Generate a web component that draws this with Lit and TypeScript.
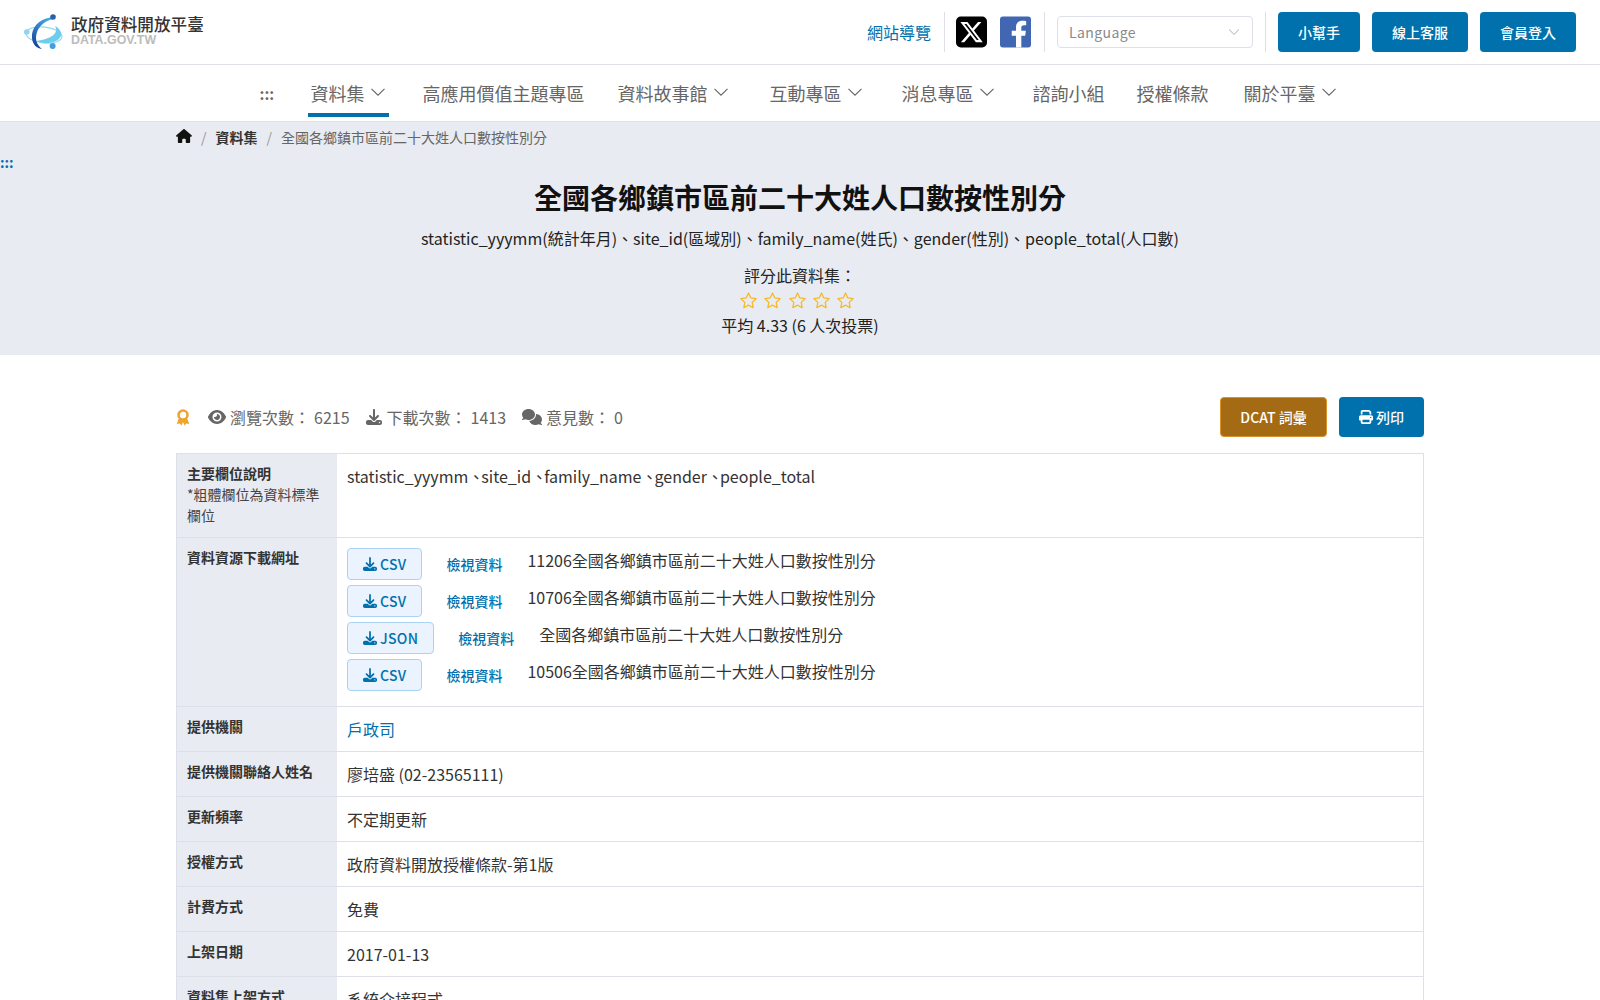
import {LitElement, css, html, svg} from 'lit';
import {customElement} from 'lit/decorators.js';

const DOWNLOAD = svg`<path d="M288 32c0-17.7-14.3-32-32-32s-32 14.3-32 32V274.7l-73.4-73.4c-12.5-12.5-32.8-12.5-45.3 0s-12.5 32.8 0 45.3l128 128c12.5 12.5 32.8 12.5 45.3 0l128-128c12.5-12.5 12.5-32.8 0-45.3s-32.8-12.5-45.3 0L288 274.7V32zM64 352c-35.3 0-64 28.7-64 64v32c0 35.3 28.7 64 64 64H448c35.3 0 64-28.7 64-64V416c0-35.3-28.7-64-64-64H346.5l-45.3 45.3c-25 25-65.5 25-90.5 0L165.5 352H64zm368 56a24 24 0 1 1 0 48 24 24 0 1 1 0-48z"/>`;
const downloadIcon = html`<svg class="ico" viewBox="0 0 512 512" fill="currentColor">${DOWNLOAD}</svg>`;
const chevron = html`<svg class="chev" viewBox="0 0 16 16" fill="none" stroke="currentColor" stroke-width="1.1"><path d="M1.5 4.8 8 11.2l6.5-6.4"/></svg>`;
const star = html`<svg class="star" viewBox="0 0 24 24" fill="none" stroke="#f6b92b" stroke-width="1.6" stroke-linejoin="round"><path d="M12 2.6l2.9 6.2 6.7.9-4.9 4.7 1.2 6.7-5.9-3.3-5.9 3.3 1.2-6.7-4.9-4.7 6.7-.9z"/></svg>`;

// after: the site's menu items are not evenly spaced
const NAV = [
  {label: '資料集', more: true, active: true, after: 4},
  {label: '高應用價值主題專區', after: 0},
  {label: '資料故事館', more: true, after: 8},
  {label: '互動專區', more: true, after: 6},
  {label: '消息專區', more: true, after: 5},
  {label: '諮詢小組', after: -1},
  {label: '授權條款', after: 2},
  {label: '關於平臺', more: true, after: 0},
];

const RESOURCES = [
  {type: 'CSV', name: '11206全國各鄉鎮市區前二十大姓人口數按性別分'},
  {type: 'CSV', name: '10706全國各鄉鎮市區前二十大姓人口數按性別分'},
  {type: 'JSON', name: '全國各鄉鎮市區前二十大姓人口數按性別分'},
  {type: 'CSV', name: '10506全國各鄉鎮市區前二十大姓人口數按性別分'},
];

const FIELDS = ['statistic_yyymm', 'site_id', 'family_name', 'gender', 'people_total'];

const ROWS = [
  ['提供機關聯絡人姓名', '廖培盛 (02-23565111)'],
  ['更新頻率', '不定期更新'],
  ['授權方式', '政府資料開放授權條款-第1版'],
  ['計費方式', '免費'],
  ['上架日期', '2017-01-13'],
  ['資料集上架方式', '系統介接程式'],
];

@customElement('app-root')
export class AppRoot extends LitElement {
  static styles = css`
    :host {
      display: block;
      height: 1000px;
      overflow: hidden;
      background: #fff;
      color: #333;
      font-family: "Noto Sans CJK TC", "Noto Sans", sans-serif;
      font-size: 16px;
      line-height: 24px;
    }
    a { color: #0071ad; text-decoration: none; }
    .top {
      height: 64px;
      display: flex;
      align-items: center;
      justify-content: space-between;
      padding: 0 24px;
      border-bottom: 1px solid #dde0e8;
    }
    .logo { display: flex; align-items: center; gap: 7px; }
    .logo svg { width: 40px; height: 38px; }
    .logo-text { margin-bottom: 4px; }
    .logo-name { font-size: 16.6px; line-height: 20px; font-weight: 500; color: #333; white-space: nowrap; }
    .logo-en { font-family: "Liberation Sans", sans-serif; font-size: 12.4px; line-height: 13px; font-weight: 700; color: #bcbcbc; }
    .top-right { display: flex; align-items: center; height: 40px; }
    .sep { width: 1px; height: 40px; background: #dde0e8; }
    .sitemap { margin-right: 13px; }
    .social { width: 31px; height: 32px; display: block; }
    .x { margin: 0 13px 0 11px; }
    .fb { margin-right: 13px; }
    .lang {
      width: 196px;
      height: 32px;
      box-sizing: border-box;
      margin: 0 12px;
      padding: 0 12px 0 11px;
      display: flex;
      align-items: center;
      justify-content: space-between;
      border: 1px solid #dde0e8;
      border-radius: 4px;
      color: #8a8a8a;
      font-size: 14px;
      letter-spacing: 0.4px;
    }
    .lang .chev { width: 12px; height: 12px; color: #999; }
    .btn {
      height: 40px;
      box-sizing: border-box;
      display: flex;
      align-items: center;
      justify-content: center;
      gap: 3px;
      border-radius: 4px;
      background: #0071ad;
      color: #fff;
      font-size: 14px;
      font-weight: 500;
    }
    .top-btn { margin-left: 12px; padding: 0 20px; }
    .nav {
      height: 56px;
      display: flex;
      justify-content: center;
      gap: 33px;
      padding-right: 4px;
      border-bottom: 1px solid #dde0e8;
      color: #666;
      font-size: 18px;
    }
    .nav-dots { width: 15px; margin-right: 3px; font-size: 15px; line-height: 58px; font-weight: 700; color: #666; }
    .nav-item {
      height: 52px;
      box-sizing: border-box;
      padding: 15px 3px 0;
      display: flex;
      gap: 5px;
      color: inherit;
      line-height: 26px;
      white-space: nowrap;
    }
    .nav-item.active { border-bottom: 4px solid #0071ad; }
    .nav-item .chev { width: 16px; height: 16px; margin-top: 4px; }
    .hero { height: 233px; background: #e8ebf1; display: flex; flex-direction: column; align-items: center; position: relative; }
    .crumbs {
      align-self: stretch;
      height: 30px;
      margin: 0 176px;
      display: flex;
      align-items: center;
      font-size: 14px;
      color: #666;
    }
    .crumbs svg { width: 16px; height: 14px; color: #111; margin-bottom: 2px; }
    .crumbs i { font-style: normal; color: #999; margin: 0 9px; }
    .crumbs b { color: #333; font-weight: 700; }
    .skip { position: absolute; left: 0; top: 28px; font-size: 14px; font-weight: 700; line-height: 24px; color: #0071ad; }
    h1 { margin: 23px 0 0; font-size: 28px; line-height: 44px; font-weight: 700; color: #111; }
    .fields { margin-top: 6px; color: #222; line-height: 26px; }
    .rate { margin-top: 12px; color: #222; line-height: 24px; }
    .stars { display: flex; gap: 5.2px; height: 26px; align-items: center; margin-right: 6px; }
    .star { width: 19px; height: 19px; display: block; }
    .avg { color: #222; line-height: 24px; }
    .main { padding: 42px 176px 0; }
    .stat-bar { display: flex; align-items: center; height: 40px; color: #666; }
    .award { width: 14px; height: 17px; margin-right: 18px; }
    .stat { display: flex; align-items: center; margin-right: 16px; white-space: nowrap; }
    .stat svg { height: 16px; margin-right: 4px; }
    .stat.dl-stat svg { margin-right: 5px; }
    .stat span { margin-left: 4px; }
    .stat-btns { margin-left: auto; display: flex; gap: 12px; }
    .dcat { width: 107px; background: #a56b14; border: 1px solid #d8922b; }
    .print { width: 85px; }
    .print svg { width: 14px; height: 14px; }
    table { margin-top: 16px; width: 100%; border-collapse: collapse; table-layout: fixed; border: 1px solid #dde0e8; }
    th, td { border-top: 1px solid #dde0e8; padding: 10px; vertical-align: top; text-align: left; }
    th { width: 141px; background: #e8ebf1; font-size: 14px; line-height: 21px; font-weight: 700; color: #333; padding: 9px 9px 11px 10px; }
    th small { display: block; font-size: 14px; font-weight: 400; color: #444; }
    td { color: #333; }
    .comma { letter-spacing: -3px; }
    .res { display: flex; align-items: flex-start; height: 32px; margin-bottom: 5px; white-space: nowrap; }
    .dl {
      height: 32px;
      box-sizing: border-box;
      display: flex;
      align-items: center;
      gap: 3px;
      padding: 0 15px;
      background: #eaf3fe;
      border: 1px solid #a9d3f5;
      border-radius: 4px;
      color: #0071ad;
      font-size: 14px;
      font-weight: 500;
      letter-spacing: 0.3px;
    }
    .ico { width: 14px; height: 14px; display: block; }
    .view { margin: 4px 25px 0 24px; font-size: 14px; font-weight: 500; }
  `;

  render() {
    return html`
      <header class="top">
        <a class="logo">
          <svg viewBox="0 0 40 38">
            <defs>
              <linearGradient id="swirl" x1="0.7" y1="0" x2="0.3" y2="1">
                <stop offset="0" stop-color="#45a9e4"/>
                <stop offset="0.55" stop-color="#2a6fc0"/>
                <stop offset="1" stop-color="#173f95"/>
              </linearGradient>
            </defs>
            <ellipse cx="20" cy="22" rx="18" ry="8" fill="none" stroke="#8edaf1" stroke-width="1.2" transform="rotate(6 20 22)"/>
            <path d="M12 28C22 32 34 30 37 23 38 19 35 15 31 13 35 20 28 26 12 28z" fill="#6fcdec"/>
            <path d="M26 4.500C15 6 7 15 8 25 8.500 31 12 35 18 36 13 32 11 27 12.500 21 14 14 20 8 29 6z" fill="url(#swirl)"/>
            <circle cx="29" cy="4" r="2.800" fill="#2c5fb0"/>
            <circle cx="2.800" cy="19" r="2.800" fill="#8fd5f0"/>
            <circle cx="28.600" cy="33" r="3" fill="#3f9fdf"/>
          </svg>
          <div class="logo-text">
            <div class="logo-name">政府資料開放平臺</div>
            <div class="logo-en">DATA.GOV.TW</div>
          </div>
        </a>
        <div class="top-right">
          <a class="sitemap">網站導覽</a>
          <div class="sep"></div>
          <svg class="social x" viewBox="0 0 32 32"><rect width="32" height="32" rx="5" fill="#000"/><path fill="#fff" transform="translate(3.200 3.200) scale(1.070)" d="M18.244 2.250h3.308l-7.227 8.260 8.502 11.240H16.170l-5.214-6.817L4.990 21.750H1.680l7.730-8.835L1.254 2.250H8.080l4.713 6.231zm-1.161 17.520h1.833L7.084 4.126H5.117z"/></svg>
          <svg class="social fb" viewBox="0 0 32 32"><rect width="32" height="32" rx="3" fill="#4267b2"/><path fill="#fff" d="M22 32V19.800h4l.7-5H22v-3c0-1.500.7-2.700 2.900-2.700h2.100V4.800c-1-.1-2.400-.3-3.900-.3-4 0-6.600 2.400-6.600 6.700v3.600h-4.400v5h4.400V32z"/></svg>
          <div class="sep"></div>
          <div class="lang">Language ${chevron}</div>
          <div class="sep"></div>
          <a class="btn top-btn">小幫手</a>
          <a class="btn top-btn">線上客服</a>
          <a class="btn top-btn">會員登入</a>
        </div>
      </header>
      <nav class="nav">
        <span class="nav-dots">:::</span>
        ${NAV.map(n => html`
          <a class="nav-item ${n.active ? 'active' : ''}" style="margin:0 ${n.after - 3}px 0 -3px">${n.label}${n.more ? chevron : ''}</a>
        `)}
      </nav>
      <section class="hero">
        <div class="crumbs">
          <svg viewBox="0 0 576 512" fill="currentColor"><path d="M575.800 255.500c0 18-15 32.100-32 32.100h-32l.7 160.200c0 2.700-.2 5.400-.5 8.100V472c0 22.100-17.900 40-40 40H456c-1.100 0-2.200 0-3.300-.1c-1.400 .1-2.800 .1-4.200 .1H416 392c-22.100 0-40-17.900-40-40V448 384c0-17.700-14.300-32-32-32H256c-17.700 0-32 14.300-32 32v64 24c0 22.100-17.900 40-40 40H160 128.100c-1.500 0-3-.1-4.500-.2c-1.200 .1-2.400 .2-3.600 .2H104c-22.100 0-40-17.900-40-40V360c0-.9 0-1.900 .1-2.800V287.600H32c-18 0-32-14-32-32.100c0-9 3-17 10-24L266.400 8c7-7 15-8 22-8s15 2 21 7L564.800 231.500c8 7 12 15 11 24z"/></svg>
          <i>/</i><b>資料集</b><i>/</i>全國各鄉鎮市區前二十大姓人口數按性別分
        </div>
        <span class="skip">:::</span>
        <h1>全國各鄉鎮市區前二十大姓人口數按性別分</h1>
        <div class="fields">statistic_yyymm(統計年月)、site_id(區域別)、family_name(姓氏)、gender(性別)、people_total(人口數)</div>
        <div class="rate">評分此資料集：</div>
        <div class="stars">${[0, 1, 2, 3, 4].map(() => star)}</div>
        <div class="avg">平均 4.33 (6 人次投票)</div>
      </section>
      <main class="main">
        <div class="stat-bar">
          <svg class="award" viewBox="0 0 14 17"><circle cx="7" cy="6" r="4.500" fill="none" stroke="#efa42f" stroke-width="2.600"/><path d="M2.500 10 .8 15l3-.6L5.500 16.500 7 13l1.500 3.500 1.700-2.100 3 .6-1.700-5z" fill="#efa42f"/></svg>
          <div class="stat">
            <svg viewBox="0 0 576 512" fill="currentColor"><path d="M288 32c-80.800 0-145.500 36.800-192.600 80.600C48.600 156 17.300 208 2.500 243.700c-3.300 7.900-3.300 16.700 0 24.600C17.300 304 48.600 356 95.400 399.400C142.500 443.200 207.200 480 288 480s145.500-36.800 192.600-80.600c46.800-43.500 78.100-95.400 93-131.100c3.300-7.900 3.300-16.700 0-24.600c-14.900-35.700-46.200-87.700-93-131.100C433.500 68.800 368.800 32 288 32zM144 256a144 144 0 1 1 288 0 144 144 0 1 1 -288 0zm144-64c0 35.300-28.700 64-64 64c-7.100 0-13.900-1.200-20.300-3.300c-5.500-1.800-11.900 1.600-11.700 7.400c.3 6.900 1.300 13.800 3.200 20.700c13.700 51.200 66.400 81.600 117.600 67.900s81.600-66.400 67.900-117.600c-11.100-41.500-47.800-69.400-88.600-71.100c-5.800-.2-9.200 6.100-7.400 11.700c2.100 6.400 3.300 13.200 3.300 20.300z"/></svg>
            瀏覽次數：<span>6215</span>
          </div>
          <div class="stat dl-stat">
            <svg viewBox="0 0 512 512" fill="currentColor">${DOWNLOAD}</svg>
            下載次數：<span>1413</span>
          </div>
          <div class="stat">
            <svg viewBox="0 0 640 512" fill="currentColor"><path d="M208 352c114.900 0 208-78.800 208-176S322.900 0 208 0S0 78.800 0 176c0 38.600 14.700 74.300 39.600 103.400c-3.500 9.400-8.700 17.700-14.200 24.700c-4.800 6.200-9.700 11-13.300 14.300c-1.800 1.600-3.300 2.900-4.300 3.700c-.5 .4-.9 .7-1.100 .8l-.2 .2 0 0 0 0C1 327.200-1.400 334.400 .8 340.900S9.100 352 16 352c21.800 0 43.800-5.600 62.100-12.500c9.200-3.500 17.800-7.400 25.300-11.400C134.100 343.300 169.800 352 208 352zM448 176c0 112.300-99.100 196.900-216.500 207C255.800 457.400 336.400 512 432 512c38.200 0 73.900-8.700 104.700-23.900c7.500 4 16 7.900 25.200 11.400c18.300 6.900 40.300 12.500 62.100 12.500c6.900 0 13.100-4.500 15.200-11.100c2.100-6.600-.2-13.800-5.800-17.900l0 0 0 0-.2-.2c-.2-.2-.6-.4-1.100-.8c-1-.8-2.500-2-4.300-3.700c-3.600-3.300-8.500-8.100-13.300-14.300c-5.500-7-10.700-15.400-14.200-24.700c24.900-29 39.600-64.700 39.600-103.400c0-92.800-84.900-168.900-192.600-175.500c.4 5.100 .6 10.300 .6 15.500z"/></svg>
            意見數：<span>0</span>
          </div>
          <div class="stat-btns">
            <a class="btn dcat">DCAT 詞彙</a>
            <a class="btn print">
              <svg viewBox="0 0 512 512" fill="currentColor"><path d="M128 0C92.700 0 64 28.700 64 64v96h64V64H354.700L384 93.300V160h64V93.300c0-17-6.700-33.300-18.700-45.300L400 18.700C388 6.700 371.700 0 354.700 0H128zM384 352v32 64H128V384 368 352H384zm64 32h32c17.700 0 32-14.300 32-32V256c0-35.300-28.700-64-64-64H64c-35.300 0-64 28.700-64 64v96c0 17.700 14.300 32 32 32H64v64c0 35.300 28.700 64 64 64H384c35.300 0 64-28.700 64-64V384zM432 248a24 24 0 1 1 0 48 24 24 0 1 1 0-48z"/></svg>
              列印
            </a>
          </div>
        </div>
        <table>
          <tr>
            <th>主要欄位說明<small>*粗體欄位為資料標準欄位</small></th>
            <td>${FIELDS.map((f, i) => html`${f}${i < FIELDS.length - 1 ? html`<span class="comma">、</span>` : ''}`)}</td>
          </tr>
          <tr>
            <th>資料資源下載網址</th>
            <td>
              ${RESOURCES.map(r => html`
                <div class="res">
                  <a class="dl">${downloadIcon}${r.type}</a>
                  <a class="view">檢視資料</a>
                  <span>${r.name}</span>
                </div>
              `)}
            </td>
          </tr>
          <tr><th>提供機關</th><td><a>戶政司</a></td></tr>
          ${ROWS.map(([k, v]) => html`<tr><th>${k}</th><td>${v}</td></tr>`)}
        </table>
      </main>
    `;
  }
}
